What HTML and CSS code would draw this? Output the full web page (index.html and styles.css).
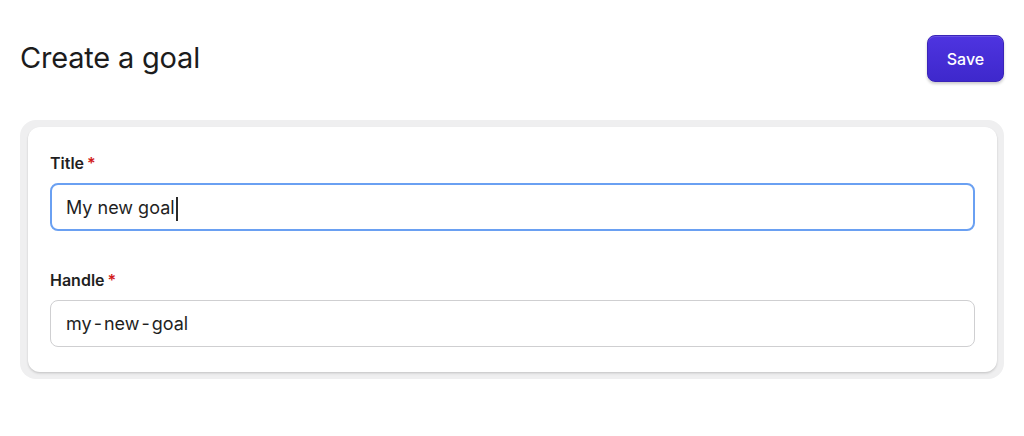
FILE: index.html
```html
<!DOCTYPE html>
<html lang="en">
<head>
<meta charset="utf-8">
<title>Create a goal</title>
<link rel="stylesheet" href="styles.css">
</head>
<body>
<div class="page">
  <header class="header">
    <h1 class="heading">Create a goal</h1>
    <button class="save" type="button">Save</button>
  </header>
  <div class="outer">
    <div class="card">
      <div class="field">
        <label class="label">Title<span class="req">*</span></label>
        <div class="input focused"><span>My new goa</span><span class="caret-wrap">l<span class="caret"></span></span></div>
      </div>
      <div class="field">
        <label class="label">Handle<span class="req">*</span></label>
        <div class="input">my<span class="dash">-</span>new<span class="dash">-</span>goal</div>
      </div>
    </div>
  </div>
</div>
</body>
</html>
```
FILE: styles.css
```css
* { box-sizing: border-box; }
html, body { margin: 0; padding: 0; background: #ffffff; }
body { font-family: Inter, "Noto Sans", sans-serif; color: #1f1f1f; }
.page { padding: 0 20px 0 20px; }
.header {
  display: flex;
  justify-content: space-between;
  align-items: center;
  height: 117px;
}
.heading {
  margin: 0 0 2px 0;
  font-size: 29px;
  font-weight: 400;
  letter-spacing: -0.2px;
  color: #1c1c1c;
}
.save {
  width: 77px;
  height: 47px;
  border: 1px solid #3a24b8;
  border-radius: 8px;
  background: linear-gradient(#4e34e0, #3e28cc);
  color: #ffffff;
  font-family: Inter, "Noto Sans", sans-serif;
  font-size: 16px;
  font-weight: 500;
  box-shadow: 0 2px 3px rgba(0,0,0,0.2), inset 0 1px 0 rgba(255,255,255,0.15);
}
.outer {
  margin-top: 3px;
  background: #efeff0;
  border-radius: 16px;
  padding: 7px 7px 7px 8px;
}
.card {
  background: #ffffff;
  border-radius: 12px;
  padding: 25px 22px 25px 22px;
  box-shadow: 0 1px 2px rgba(0,0,0,0.12), 0 2px 3px rgba(0,0,0,0.06);
}
.field + .field { margin-top: 38px; }
.label {
  display: block;
  font-size: 16px;
  font-weight: 600;
  color: #1f1f1f;
  margin-bottom: 9px;
  line-height: 22px;
}
.req { color: #d21c1c; margin-left: 3px; }
.input {
  height: 47px;
  border: 1px solid #cfcfd1;
  border-radius: 8px;
  padding: 0 15px;
  display: flex;
  align-items: center;
  font-size: 18px;
  color: #1f1f1f;
}
.input.focused {
  height: 48px;
  border: 2px solid #6aa0f2;
  padding: 0 14px;
}
.dash { margin: 0 2px; }
.caret-wrap { position: relative; }
.caret {
  position: absolute;
  right: -3px;
  top: 0;
  width: 2px;
  height: 24px;
  background: #2a2a2a;
}
```
